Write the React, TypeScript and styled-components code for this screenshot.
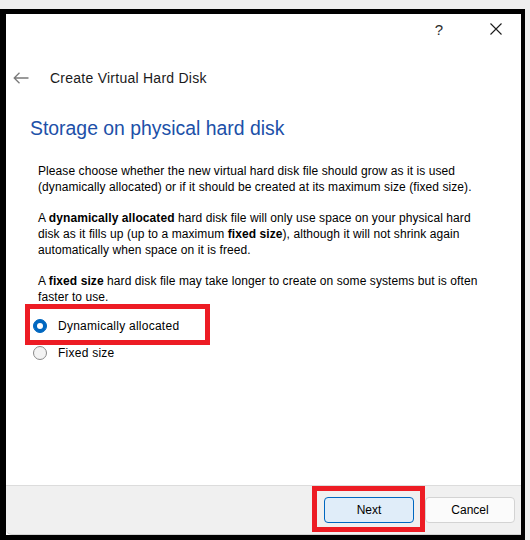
import styled, { createGlobalStyle } from "styled-components";

const GlobalStyle = createGlobalStyle`
    html, body {
        margin: 0;
        padding: 0;
        background: #efefef;
    }
    body {
        font-family: "Liberation Sans", Arial, sans-serif;
        color: #000;
    }
`;

export default function App() {
    return (
        <Page>
            <GlobalStyle />
            <Window>
                <TitleBar>
                    <HelpButton>?</HelpButton>
                    <CloseButton aria-label="Close">
                        <svg width="12" height="12" viewBox="0 0 12 12">
                            <path d="M0.5 0.5 L11.5 11.5 M11.5 0.5 L0.5 11.5" stroke="#1b1b1b" strokeWidth="1.1" />
                        </svg>
                    </CloseButton>
                </TitleBar>

                <NavRow>
                    <BackArrow viewBox="0 0 16 12" width="16" height="12">
                        <path d="M1 6 H15.5 M6.5 0.8 L1.2 6 L6.5 11.2" stroke="#7a7a7a" strokeWidth="1.3" fill="none" />
                    </BackArrow>
                    <WizardTitle>Create Virtual Hard Disk</WizardTitle>
                </NavRow>

                <Content>
                    <Heading>Storage on physical hard disk</Heading>

                    <Paragraph>
                        Please choose whether the new virtual hard disk file should grow as it is used
                        <br />
                        (dynamically allocated) or if it should be created at its maximum size (fixed size).
                    </Paragraph>
                    <Paragraph>
                        A <b>dynamically allocated</b> hard disk file will only use space on your physical hard
                        <br />
                        disk as it fills up (up to a maximum <b>fixed size</b>), although it will not shrink again
                        <br />
                        automatically when space on it is freed.
                    </Paragraph>
                    <Paragraph>
                        A <b>fixed size</b> hard disk file may take longer to create on some systems but is often
                        <br />
                        faster to use.
                    </Paragraph>

                    <RadioGroup>
                        <RadioRow $highlight>
                            <RadioCircle $checked />
                            <RadioLabel>Dynamically allocated</RadioLabel>
                        </RadioRow>
                        <RadioRow>
                            <RadioCircle />
                            <RadioLabel>Fixed size</RadioLabel>
                        </RadioRow>
                    </RadioGroup>
                </Content>

                <Footer>
                    <Button $primary $highlight>Next</Button>
                    <Button>Cancel</Button>
                </Footer>
            </Window>
        </Page>
    );
}

const Page = styled.div`
    width: 530px;
    height: 540px;
    padding-top: 9px;
    box-sizing: border-box;
    overflow: hidden;
`;

const Window = styled.div`
    width: 525px;
    height: 531px;
    box-sizing: border-box;
    border-style: solid;
    border-color: #000;
    border-width: 5px 4px 5px 6px;
    background: #fff;
    display: flex;
    flex-direction: column;
`;

const TitleBar = styled.div`
    height: 30px;
    display: flex;
    justify-content: flex-end;
    align-items: center;
`;

const HelpButton = styled.div`
    width: 64px;
    text-align: center;
    font-size: 15px;
    color: #2b2b2b;
`;

const CloseButton = styled.div`
    width: 50px;
    height: 30px;
    display: flex;
    align-items: center;
    justify-content: center;
`;

const NavRow = styled.div`
    margin-top: 20px;
    height: 28px;
    display: flex;
    align-items: center;
    padding-left: 7px;
`;

const BackArrow = styled.svg`
    flex: none;
`;

const WizardTitle = styled.div`
    margin-left: 21px;
    font-size: 14px;
    letter-spacing: 0.25px;
    color: #1b1b1b;
`;

const Content = styled.div`
    flex: 1;
    padding-top: 22px;
`;

const Heading = styled.div`
    margin-left: 24px;
    font-size: 19.4px;
    line-height: 28px;
    color: #2050a8;
`;

const Paragraph = styled.p`
    margin: 0 0 15px 32px;
    font-size: 12px;
    line-height: 16px;
    letter-spacing: 0.08px;
    white-space: nowrap;

    &:first-of-type {
        margin-top: 21px;
    }
`;

const RadioGroup = styled.div`
    margin-top: -8px;
    padding-left: 27px;
    display: flex;
    flex-direction: column;
    align-items: flex-start;
`;

const RadioRow = styled.div<{ $highlight?: boolean }>`
    position: relative;
    height: 27px;
    display: flex;
    align-items: center;
    gap: 11px;

    &::after {
        content: "";
        display: ${(p) => (p.$highlight ? "block" : "none")};
        position: absolute;
        top: -8px;
        bottom: -6px;
        left: -8px;
        right: -31px;
        border: 5px solid #ed1c24;
    }
`;

const RadioCircle = styled.span<{ $checked?: boolean }>`
    width: 14px;
    height: 14px;
    box-sizing: border-box;
    border-radius: 50%;
    border: 1px solid ${(p) => (p.$checked ? "#0067c0" : "#8a8a8a")};
    background: ${(p) => (p.$checked ? "#0067c0" : "#f3f3f3")};
    display: flex;
    align-items: center;
    justify-content: center;

    &::before {
        content: "";
        display: ${(p) => (p.$checked ? "block" : "none")};
        width: 6px;
        height: 6px;
        border-radius: 50%;
        background: #fff;
    }
`;

const RadioLabel = styled.span`
    font-size: 12px;
    letter-spacing: 0.25px;
    color: #000;
`;

const Footer = styled.div`
    height: 50px;
    box-sizing: border-box;
    border-top: 1px solid #dcdcdc;
    border-bottom: 1px solid #d2d2d2;
    border-bottom-left-radius: 6px;
    background: #f0f0f0;
    display: flex;
    justify-content: flex-end;
    align-items: center;
    gap: 11px;
    padding-right: 6px;
`;

const Button = styled.div<{ $primary?: boolean; $highlight?: boolean }>`
    position: relative;
    width: 90px;
    height: 26px;
    box-sizing: border-box;
    border-radius: 4px;
    border: 1px solid ${(p) => (p.$primary ? "#0067c0" : "#d3d3d3")};
    background: ${(p) => (p.$primary ? "#e0edf9" : "#fbfbfb")};
    display: flex;
    align-items: center;
    justify-content: center;
    font-size: 12px;
    color: #000;

    &::after {
        content: "";
        display: ${(p) => (p.$highlight ? "block" : "none")};
        position: absolute;
        top: -12px;
        bottom: -10px;
        left: -13px;
        right: -12px;
        border: 5px solid #ed1c24;
    }
`;
